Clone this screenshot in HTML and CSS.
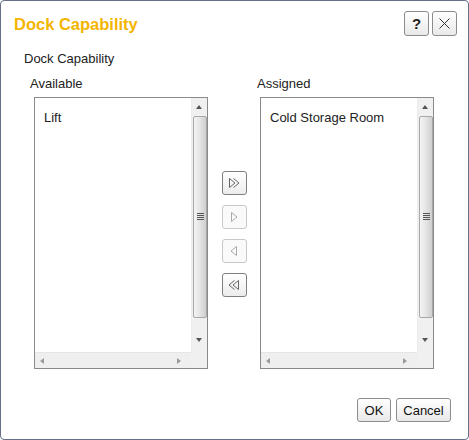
FILE: index.html
```html
<!DOCTYPE html>
<html>
<head>
<meta charset="utf-8">
<link rel="stylesheet" href="styles.css">
</head>
<body>
<div class="dialog">
  <div class="header">
    <div class="title">Dock Capability</div>
    <button class="hbtn help">?</button>
    <button class="hbtn close">
      <svg width="13" height="13" viewBox="0 0 13 13"><path d="M1.5 1.5 L11.5 11.5 M11.5 1.5 L1.5 11.5" stroke="#333" stroke-width="1" fill="none"/></svg>
    </button>
  </div>
  <div class="section-label">Dock Capability</div>
  <div class="lists">
    <div class="col">
      <div class="col-label">Available</div>
      <div class="listbox">
        <div class="items"><div class="item">Lift</div></div>
        <div class="vscroll">
          <div class="arrow up"></div>
          <div class="thumb"><div class="grip"></div></div>
          <div class="arrow down"></div>
        </div>
        <div class="hscroll">
          <div class="harrow left"></div>
          <div class="harrow right"></div>
        </div>
        <div class="corner"></div>
      </div>
    </div>
    <div class="mid">
      <button class="mbtn">
        <svg width="14" height="14" viewBox="0 0 14 14"><path d="M2.5 2.5 L8 7 L2.5 11.5 Z M6.5 2.5 L12 7 L6.5 11.5" stroke="#666" stroke-width="1" fill="none" stroke-linejoin="miter"/></svg>
      </button>
      <button class="mbtn disabled">
        <svg width="14" height="14" viewBox="0 0 14 14"><path d="M4.5 2.5 L10 7 L4.5 11.5 Z" stroke="#aaa" stroke-width="1" fill="none"/></svg>
      </button>
      <button class="mbtn disabled">
        <svg width="14" height="14" viewBox="0 0 14 14"><path d="M9.5 2.5 L4 7 L9.5 11.5 Z" stroke="#aaa" stroke-width="1" fill="none"/></svg>
      </button>
      <button class="mbtn">
        <svg width="14" height="14" viewBox="0 0 14 14"><path d="M11.5 2.5 L6 7 L11.5 11.5 Z M7.5 2.5 L2 7 L7.5 11.5" stroke="#666" stroke-width="1" fill="none"/></svg>
      </button>
    </div>
    <div class="col">
      <div class="col-label right">Assigned</div>
      <div class="listbox">
        <div class="items"><div class="item">Cold Storage Room</div></div>
        <div class="vscroll">
          <div class="arrow up"></div>
          <div class="thumb"><div class="grip"></div></div>
          <div class="arrow down"></div>
        </div>
        <div class="hscroll">
          <div class="harrow left"></div>
          <div class="harrow right"></div>
        </div>
        <div class="corner"></div>
      </div>
    </div>
  </div>
  <div class="footer">
    <button class="fbtn ok">OK</button>
    <button class="fbtn cancel">Cancel</button>
  </div>
</div>
</body>
</html>
```

FILE: styles.css
```css
* { box-sizing: border-box; }
html, body { margin: 0; padding: 0; background: #fff; }
body { font-family: "Liberation Sans", Arial, sans-serif; font-size: 13px; color: #222; }

.dialog {
  width: 469px;
  height: 440px;
  border: 1px solid #66708a;
  border-radius: 4px;
  background: #fff;
  display: flex;
  flex-direction: column;
}

.header {
  display: flex;
  align-items: center;
  padding: 10px 11px 0 13px;
  height: 35px;
}
.title {
  flex: 1;
  font-size: 16.5px;
  font-weight: bold;
  color: #f3b500;
  padding-top: 2px;
}
.hbtn {
  width: 25px;
  height: 25px;
  margin-left: 3px;
  padding: 0;
  border: 1px solid #8c8c8c;
  border-radius: 3px;
  background: linear-gradient(#ffffff, #e9e9e9);
  display: flex;
  align-items: center;
  justify-content: center;
  font-family: "Liberation Sans", Arial, sans-serif;
}
.help { font-size: 15px; font-weight: bold; color: #222; }

.section-label {
  margin: 15px 0 0 23px;
  line-height: 16px;
}

.lists {
  display: flex;
  margin-top: 8px;
  padding-left: 29px;
}
.col { display: flex; flex-direction: column; }
.col-label { line-height: 16px; padding-top: 1px; margin-bottom: 5px; }
.col-label.right { margin-left: -3px; }
.col .listbox { margin-left: 4px; }
.col-label.right + .listbox { margin-left: 0; }

.listbox {
  width: 174px;
  height: 272px;
  border: 1px solid #8a8a8a;
  display: grid;
  grid-template-columns: 1fr 16px;
  grid-template-rows: 1fr 16px;
}
.items { padding: 12px 0 0 9px; }
.item { line-height: 16px; }

.vscroll {
  background: #f0f0f0;
  display: flex;
  flex-direction: column;
  align-items: center;
  border-left: 1px solid #ececec;
}
.arrow { height: 18px; width: 100%; position: relative; }
.arrow::after {
  content: "";
  position: absolute;
  left: 4px;
  border-left: 3.5px solid transparent;
  border-right: 3.5px solid transparent;
}
.arrow.up::after { top: 7px; border-bottom: 4px solid #555; }
.arrow.down::after { top: 7px; border-top: 4px solid #555; }
.arrow.down { height: 34px; }
.arrow.down::after { top: 20px; }

.thumb {
  width: 14px;
  flex: 1;
  border: 1px solid #a8a8a8;
  border-radius: 2px;
  background: linear-gradient(90deg, #f4f4f4, #e4e4e4 50%, #cfcfcf);
  display: flex;
  align-items: center;
  justify-content: center;
  margin-left: 1px;
}
.grip {
  width: 7px;
  height: 8px;
  background: repeating-linear-gradient(#555 0 1px, transparent 1px 2px);
}

.hscroll {
  background: #efefef;
  border-top: 1px solid #e6e6e6;
  display: flex;
  justify-content: space-between;
  align-items: center;
  padding: 0 10px 0 5px;
}
.harrow {
  width: 0; height: 0;
  border-top: 3.5px solid transparent;
  border-bottom: 3.5px solid transparent;
}
.harrow.left { border-right: 4px solid #9a9a9a; }
.harrow.right { border-left: 4px solid #9a9a9a; }
.corner { background: #f0f0f0; }

.mid {
  width: 52px;
  display: flex;
  flex-direction: column;
  align-items: center;
  padding-top: 96px;
  gap: 10px;
}
.mbtn {
  width: 25px;
  height: 24px;
  padding: 0;
  border: 1px solid #7f7f7f;
  border-radius: 3px;
  background: linear-gradient(#ffffff, #ececec);
  display: flex;
  align-items: center;
  justify-content: center;
}
.mbtn.disabled { border-color: #c8c8c8; background: #fafafa; }

.footer {
  display: flex;
  justify-content: flex-end;
  gap: 5px;
  padding: 29px 17px 0 0;
}
.fbtn {
  height: 24px;
  padding: 0 5px;
  border: 1px solid #8c8c8c;
  border-radius: 3px;
  background: linear-gradient(#ffffff, #e9e9e9);
  font-family: "Liberation Sans", Arial, sans-serif;
  font-size: 13px;
  color: #111;
}
.fbtn.ok { width: 34px; padding: 0; }
.fbtn.cancel { width: 55px; padding: 0; }
```
